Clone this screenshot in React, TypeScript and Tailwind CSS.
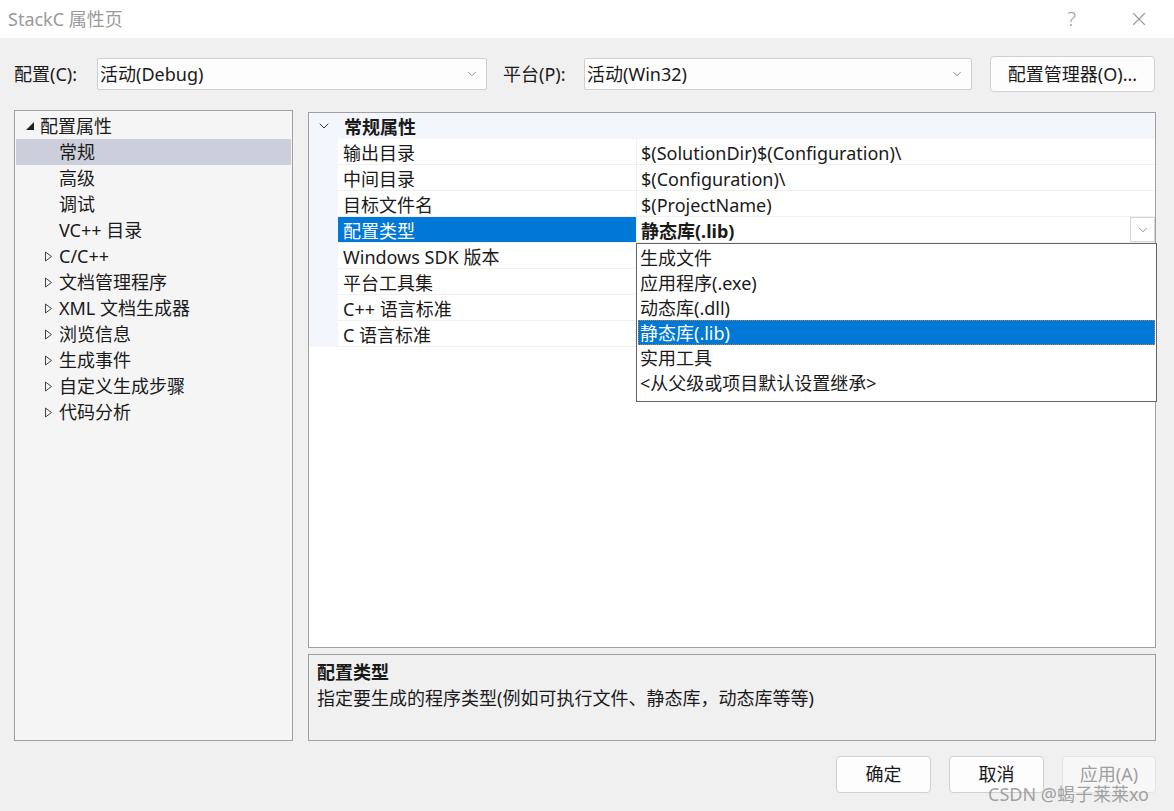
import { ChevronDown, X } from 'lucide-react';

const font = { fontFamily: '"Noto Sans", "Noto Sans CJK SC", sans-serif' };

const treeItems = [
  { label: '常规', level: 1, selected: true },
  { label: '高级', level: 1 },
  { label: '调试', level: 1 },
  { label: 'VC++ 目录', level: 1 },
  { label: 'C/C++', level: 0 },
  { label: '文档管理程序', level: 0 },
  { label: 'XML 文档生成器', level: 0 },
  { label: '浏览信息', level: 0 },
  { label: '生成事件', level: 0 },
  { label: '自定义生成步骤', level: 0 },
  { label: '代码分析', level: 0 },
];

const props = [
  { name: '输出目录', value: '$(SolutionDir)$(Configuration)\\' },
  { name: '中间目录', value: '$(Configuration)\\' },
  { name: '目标文件名', value: '$(ProjectName)' },
  { name: '配置类型', value: '静态库(.lib)', selected: true },
  { name: 'Windows SDK 版本', value: '' },
  { name: '平台工具集', value: '' },
  { name: 'C++ 语言标准', value: '' },
  { name: 'C 语言标准', value: '' },
];

const options = ['生成文件', '应用程序(.exe)', '动态库(.dll)', '静态库(.lib)', '实用工具', '<从父级或项目默认设置继承>'];

function Select({ value, width }: { value: string; width: string }) {
  return (
    <div className={`${width} h-[32px] bg-[#fdfdfd] border border-[#cfcfcf] rounded-[2px] flex items-center justify-between pl-[2px] pr-[7px]`}>
      <span>{value}</span>
      <ChevronDown className="w-[14px] h-[14px] text-[#606060]" strokeWidth={1.2} />
    </div>
  );
}

function TreeArrowRight() {
  return (
    <svg width="9" height="11" viewBox="0 0 9 11" className="shrink-0">
      <path d="M1.5 1 L7.5 5.5 L1.5 10 Z" fill="none" stroke="#444" strokeWidth="1" />
    </svg>
  );
}

function TreeArrowDown() {
  return (
    <svg width="10" height="10" viewBox="0 0 10 10" className="shrink-0">
      <path d="M9 1 L9 9 L1 9 Z" fill="#222" />
    </svg>
  );
}

export default function App() {
  return (
    <div className="w-[1174px] h-[811px] bg-[#f0f0f0] flex flex-col relative overflow-hidden text-[18px] text-[#1a1a1a]" style={font}>
      {/* Title bar */}
      <div className="h-[38px] bg-white flex items-center justify-between pl-[8px] pr-[24px] shrink-0">
        <span className="text-[#9a9a9a]">StackC 属性页</span>
        <div className="flex items-center gap-[52px] text-[#9a9a9a]">
          <span className="text-[20px] font-light">?</span>
          <X className="w-[22px] h-[22px]" strokeWidth={1.2} />
        </div>
      </div>

      {/* Config row */}
      <div className="h-[72px] flex items-center pl-[14px] shrink-0">
        <span className="w-[83px]">配置(C):</span>
        <Select value="活动(Debug)" width="w-[390px]" />
        <span className="ml-[16px] w-[81px]">平台(P):</span>
        <Select value="活动(Win32)" width="w-[388px]" />
        <button className="ml-[18px] w-[165px] h-[36px] bg-[#fdfdfd] border border-[#d0d0d0] rounded-[4px]">配置管理器(O)...</button>
      </div>

      {/* Main */}
      <div className="flex gap-[15px] pl-[14px] h-[631px] shrink-0">
        {/* Tree */}
        <div className="w-[279px] bg-[#f5f5f5] border border-[#a0a0a0] pt-[2px] px-[1px]">
          <div className="h-[26px] flex items-center pl-[9px] gap-[5px]">
            <TreeArrowDown />
            <span>配置属性</span>
          </div>
          {treeItems.map((t) => (
            <div
              key={t.label}
              className={`h-[26px] flex items-center ${t.selected ? 'bg-[#cccedb]' : ''} ${t.level === 1 ? 'pl-[43px]' : 'pl-[28px] gap-[6px]'}`}
            >
              {t.level === 0 && <TreeArrowRight />}
              <span>{t.label}</span>
            </div>
          ))}
        </div>

        {/* Right column */}
        <div className="w-[848px] flex flex-col gap-[6px]">
          <div className="h-[536px] mt-[2px] bg-white border border-[#a0a0a0] relative">
            <div className="flex flex-col">
              <div className="h-[26px] bg-[#f3f6fb] flex items-center">
                <div className="w-[29px] flex justify-center">
                  <ChevronDown className="w-[16px] h-[16px] text-[#333]" strokeWidth={1.5} />
                </div>
                <span className="font-bold ml-[6px] pt-[2px]">常规属性</span>
              </div>
              {props.map((p) => (
                <div key={p.name} className="flex h-[26px]">
                  <div className="w-[29px] bg-[#f3f6fb] shrink-0" />
                  <div
                    className={`w-[298px] shrink-0 flex items-center pl-[5px] pt-[3px] border-b border-[#f0f0f0] ${p.selected ? 'bg-[#0078d7] text-white' : ''}`}
                  >
                    {p.name}
                  </div>
                  <div className="flex-1 flex items-center justify-between pl-[4px] border-b border-l border-[#f0f0f0]">
                    <span className={`pt-[3px] ${p.selected ? 'font-bold' : ''}`}>{p.value}</span>
                    {p.selected && (
                      <div className="w-[25px] h-[25px] border border-[#d6d6d6] flex items-center justify-center">
                        <ChevronDown className="w-[14px] h-[14px] text-[#606060]" strokeWidth={1.2} />
                      </div>
                    )}
                  </div>
                </div>
              ))}
            </div>

            {/* Dropdown popup */}
            <div className="absolute left-[327px] top-[130px] w-[521px] bg-white border border-[#646464] pt-[1px] pb-[6px] px-[1px]">
              {options.map((o) => (
                <div
                  key={o}
                  className={`h-[25px] flex items-center pl-[2px] pt-[2px] ${o === '静态库(.lib)' ? 'bg-[#0078d7] text-white outline-1 outline-dotted outline-[#c08040] -outline-offset-1' : ''}`}
                >
                  {o}
                </div>
              ))}
            </div>
          </div>

          {/* Description */}
          <div className="h-[87px] bg-[#f0f0f0] border border-[#a0a0a0] pl-[8px] pt-[4px] leading-[26px]">
            <div className="font-bold">配置类型</div>
            <div>指定要生成的程序类型(例如可执行文件、静态库，动态库等等)</div>
          </div>
        </div>
      </div>

      {/* Buttons */}
      <div className="flex justify-end gap-[18px] pr-[18px] pt-[15px]">
        <button className="w-[95px] h-[37px] bg-[#fdfdfd] border border-[#d0d0d0] rounded-[4px]">确定</button>
        <button className="w-[95px] h-[37px] bg-[#fdfdfd] border border-[#d0d0d0] rounded-[4px]">取消</button>
        <button className="w-[94px] h-[37px] bg-[#f7f7f7] border border-[#e3e3e3] rounded-[4px] text-[#a0a0a0]">应用(A)</button>
      </div>

      {/* Watermark */}
      <div className="absolute left-[988px] top-[781px] text-[18px] text-[#8a8a8a]/80 whitespace-nowrap">CSDN @蝎子莱莱xo</div>
    </div>
  );
}
